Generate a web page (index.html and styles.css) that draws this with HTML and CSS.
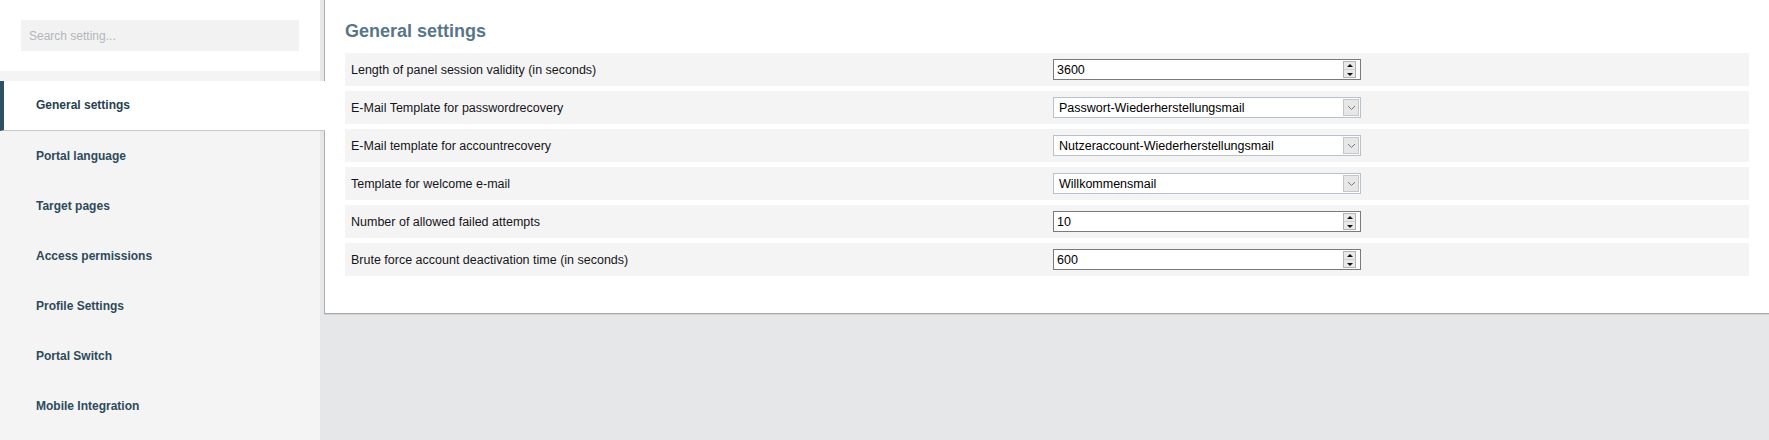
FILE: index.html
```html
<!DOCTYPE html>
<html lang="en">
<head>
    <meta charset="UTF-8">
    <meta name="viewport" content="width=device-width, initial-scale=1.0">
    <title>General settings</title>
    <link rel="stylesheet" href="styles.css">
</head>
<body>
    <div class="layout">
        <aside class="sidebar">
            <div class="search">
                <input type="text" placeholder="Search setting...">
            </div>
            <nav class="nav">
                <a class="nav-item active">General settings</a>
                <a class="nav-item">Portal language</a>
                <a class="nav-item">Target pages</a>
                <a class="nav-item">Access permissions</a>
                <a class="nav-item">Profile Settings</a>
                <a class="nav-item">Portal Switch</a>
                <a class="nav-item">Mobile Integration</a>
            </nav>
        </aside>
        <main class="main">
            <section class="panel">
                <h1>General settings</h1>
                <div class="settings">
                    <div class="setting-row">
                        <div class="setting-label">Length of panel session validity (in seconds)</div>
                        <div class="setting-value">
                            <div class="number-field">
                                <span class="field-text">3600</span>
                                <span class="spinner"><span class="spin-up"></span><span class="spin-down"></span></span>
                            </div>
                        </div>
                    </div>
                    <div class="setting-row">
                        <div class="setting-label">E-Mail Template for passwordrecovery</div>
                        <div class="setting-value">
                            <div class="select-field">
                                <span class="field-text">Passwort-Wiederherstellungsmail</span>
                                <span class="select-arrow"><svg width="9" height="6" viewBox="0 0 9 6"><polyline points="1,1 4.5,4.5 8,1" fill="none" stroke="#777" stroke-width="1"/></svg></span>
                            </div>
                        </div>
                    </div>
                    <div class="setting-row">
                        <div class="setting-label">E-Mail template for accountrecovery</div>
                        <div class="setting-value">
                            <div class="select-field">
                                <span class="field-text">Nutzeraccount-Wiederherstellungsmail</span>
                                <span class="select-arrow"><svg width="9" height="6" viewBox="0 0 9 6"><polyline points="1,1 4.5,4.5 8,1" fill="none" stroke="#777" stroke-width="1"/></svg></span>
                            </div>
                        </div>
                    </div>
                    <div class="setting-row">
                        <div class="setting-label">Template for welcome e-mail</div>
                        <div class="setting-value">
                            <div class="select-field">
                                <span class="field-text">Willkommensmail</span>
                                <span class="select-arrow"><svg width="9" height="6" viewBox="0 0 9 6"><polyline points="1,1 4.5,4.5 8,1" fill="none" stroke="#777" stroke-width="1"/></svg></span>
                            </div>
                        </div>
                    </div>
                    <div class="setting-row">
                        <div class="setting-label">Number of allowed failed attempts</div>
                        <div class="setting-value">
                            <div class="number-field">
                                <span class="field-text">10</span>
                                <span class="spinner"><span class="spin-up"></span><span class="spin-down"></span></span>
                            </div>
                        </div>
                    </div>
                    <div class="setting-row">
                        <div class="setting-label">Brute force account deactivation time (in seconds)</div>
                        <div class="setting-value">
                            <div class="number-field">
                                <span class="field-text">600</span>
                                <span class="spinner"><span class="spin-up"></span><span class="spin-down"></span></span>
                            </div>
                        </div>
                    </div>
                </div>
            </section>
        </main>
    </div>
</body>
</html>
```

FILE: styles.css
```css
body {
    margin: 0;
    font-family: "Liberation Sans", Arial, sans-serif;
    background-color: #e6e7e9;
}
.layout {
    display: flex;
    height: 100vh;
}
.sidebar {
    width: 320px;
    flex-shrink: 0;
    background-color: #f4f4f4;
    position: relative;
    z-index: 1;
}
.search {
    background-color: #fff;
    padding: 20px 21px;
}
.search input {
    display: block;
    width: 100%;
    height: 31px;
    box-sizing: border-box;
    border: none;
    background-color: #f2f2f2;
    padding: 0 8px;
    font-family: inherit;
    font-size: 12px;
    color: #333;
    outline: none;
}
.search input::placeholder {
    color: #b3b7bb;
}
.nav {
    margin-top: 10px;
}
.nav-item {
    display: block;
    height: 50px;
    line-height: 50px;
    padding-left: 36px;
    font-size: 12px;
    font-weight: bold;
    color: #2d4a5b;
    cursor: pointer;
}
.nav-item.active {
    background-color: #fff;
    border-left: 4px solid #2c5364;
    border-bottom: 1px solid #c9c9c9;
    height: 49px;
    line-height: 49px;
    padding-left: 32px;
    margin-right: -5px;
    color: #26404f;
}
.main {
    flex: 1;
    padding-left: 4px;
    min-width: 0;
}
.panel {
    background-color: #fff;
    border-left: 1px solid #adadad;
    border-bottom: 1px solid #a9a9a9;
    box-shadow: 0 1px 0 #d2d2d2;
    padding: 20px 20px 37px 20px;
}
.panel h1 {
    margin: 0 0 11px 0;
    font-size: 18px;
    line-height: 22px;
    color: #587589;
}
.settings {
    display: flex;
    flex-direction: column;
    gap: 5px;
}
.setting-row {
    display: grid;
    grid-template-columns: 1fr 1fr;
    height: 33px;
    background-color: #f4f4f4;
    align-items: center;
}
.setting-label {
    padding: 0 6px;
    font-size: 12.5px;
    color: #141420;
}
.setting-value {
    padding: 0 6px;
}
.number-field,
.select-field {
    width: 308px;
    height: 21px;
    box-sizing: border-box;
    background-color: #fff;
    display: flex;
    align-items: center;
    font-size: 12.5px;
    color: #000;
}
.number-field {
    border: 1px solid #7a7a7a;
    padding: 0 4px 0 3px;
}
.select-field {
    border: 1px solid #b7c2cc;
    padding: 0 1px 0 5px;
}
.field-text {
    flex: 1;
}
.spinner {
    width: 13px;
    height: 17px;
    display: flex;
    flex-direction: column;
}
.spin-up,
.spin-down {
    flex: 1;
    position: relative;
    background-color: #e9e9e9;
    border: 1px solid #b4b4b4;
}
.spin-up {
    border-bottom-color: #d0d0d0;
}
.spin-down {
    border-top: none;
}
.spin-up::after,
.spin-down::after {
    content: "";
    position: absolute;
    left: 3px;
    border-left: 3px solid transparent;
    border-right: 3px solid transparent;
}
.spin-up::after {
    top: 2px;
    border-bottom: 3px solid #111;
}
.spin-down::after {
    top: 3px;
    border-top: 3px solid #111;
}
.select-arrow {
    width: 16px;
    height: 17px;
    box-sizing: border-box;
    background-color: #e7e7e7;
    border: 1px solid #c6c6c6;
    display: flex;
    align-items: center;
    justify-content: center;
}
```
